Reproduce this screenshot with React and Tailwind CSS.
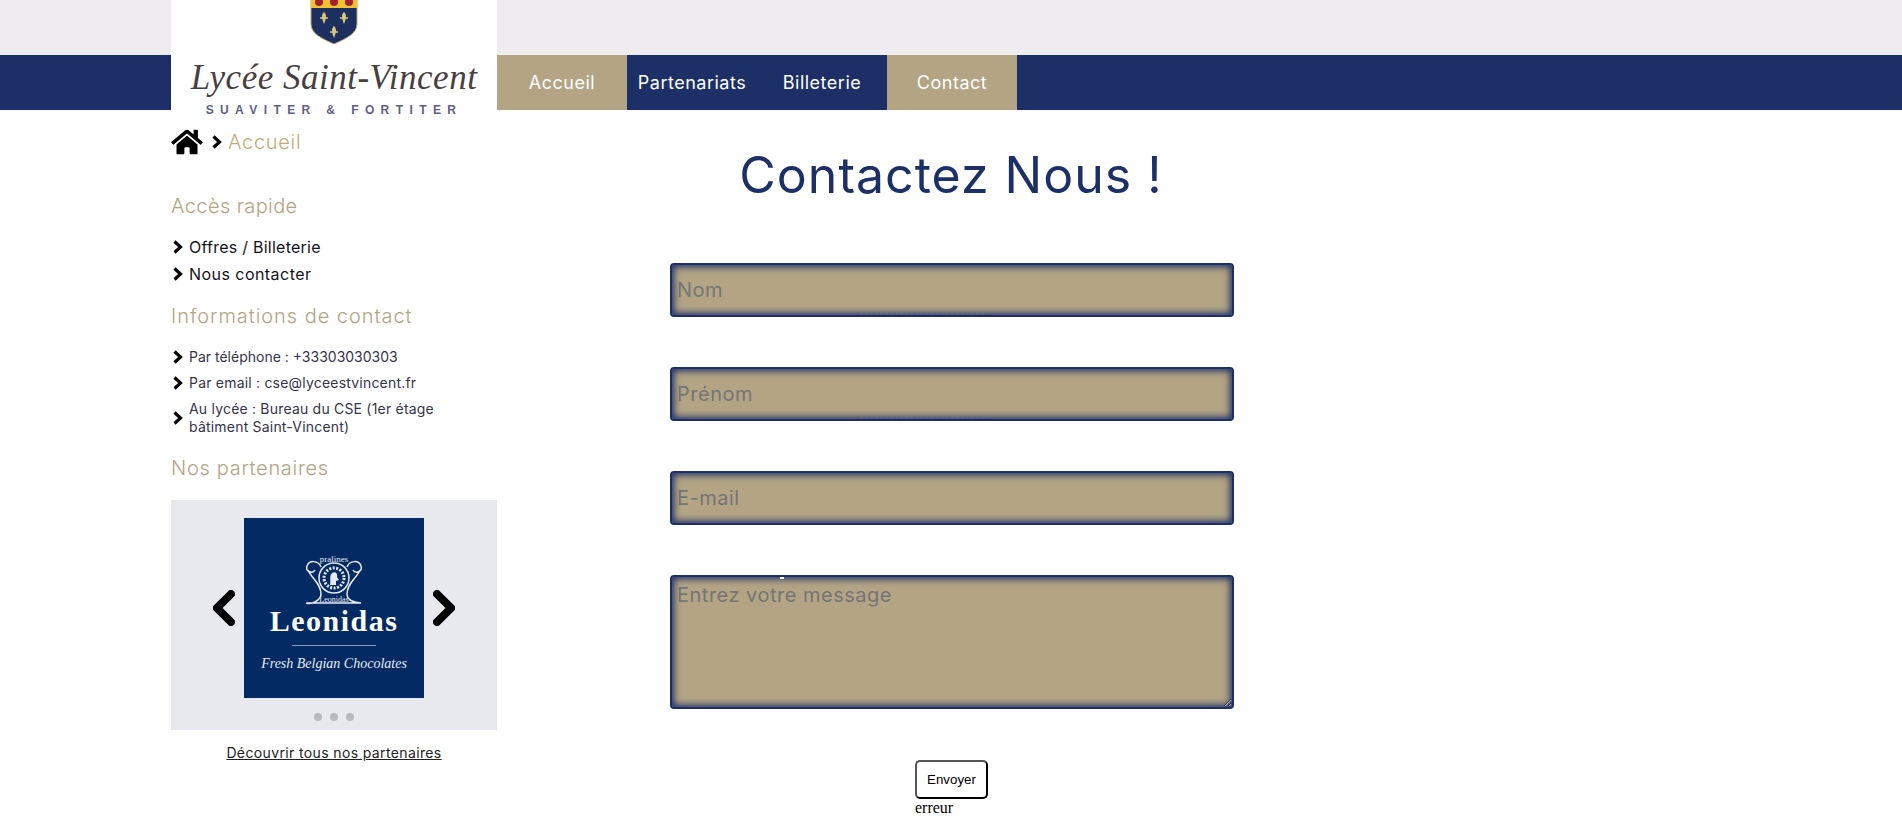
import { FaHome } from 'react-icons/fa'

const navItems = [
  { label: 'Accueil', className: 'bg-[#b3a484]' },
  { label: 'Partenariats', className: '' },
  { label: 'Billeterie', className: '' },
  { label: 'Contact', className: 'bg-[#b3a484]' },
]

function Shield() {
  return (
    <svg width="48" height="44" viewBox="0 0 48 44">
      <path d="M1 -2h46v26c0 10-12 15-23 20C13 39 1 34 1 24z" fill="#1c2f5e" stroke="#b9a36a" strokeWidth="1" />
      <path d="M1 -2h46v10H1z" fill="#f2c230" />
      <circle cx="9" cy="2" r="4" fill="#a3202c" />
      <circle cx="24" cy="2" r="4" fill="#a3202c" />
      <circle cx="39" cy="2" r="4" fill="#a3202c" />
      <path d="M14 13c2 2 2 4 0 9-2-5-2-7 0-9zM10 18h8M34 13c2 2 2 4 0 9-2-5-2-7 0-9zM30 18h8M24 27c2 2 2 4 0 9-2-5-2-7 0-9zM20 32h8" fill="#d9c67a" stroke="#d9c67a" strokeWidth="1.5" />
    </svg>
  )
}

function Logo() {
  return (
    <div className="absolute left-[171px] top-0 w-[326px] h-[118px] bg-white flex flex-col items-center">
      <Shield />
      <div className="mt-[15px] text-[35px] leading-[38px] italic text-[#47403f] font-['Liberation_Serif',serif] tracking-[0.5px]">
        Lycée Saint-Vincent
      </div>
      <div className="mt-[6px] text-[12px] leading-[14px] font-bold text-[#5f5f86] tracking-[6.4px] font-['Liberation_Sans',sans-serif] whitespace-nowrap">
        SUAVITER &amp; FORTITER
      </div>
    </div>
  )
}

function Header() {
  return (
    <header className="relative">
      <div className="h-[55px] bg-[#eeecee]" />
      <nav className="h-[55px] bg-[#1c3067] pl-[497px] flex">
        {navItems.map((item) => (
          <a key={item.label} className={`w-[130px] flex items-center justify-center text-white text-[18px] tracking-[0.5px] ${item.className}`}>
            {item.label}
          </a>
        ))}
      </nav>
      <Logo />
    </header>
  )
}

function SmallChevron({ className }) {
  return (
    <svg className={`w-[12px] h-[14px] shrink-0 ${className}`} viewBox="0 0 12 14" fill="none" stroke="black" strokeWidth="3.2">
      <polyline points="2.5,1.5 8.5,7 2.5,12.5" />
    </svg>
  )
}

function BigChevron({ flip }) {
  return (
    <svg className="w-[22px] h-[36px]" viewBox="0 0 22 36" fill="none" stroke="black" strokeWidth="8" strokeLinecap="round">
      <polyline points={flip ? '18,4 4,18 18,32' : '4,4 18,18 4,32'} />
    </svg>
  )
}

function ListItem({ children, className }) {
  return (
    <li className={`flex items-center gap-[5px] ${className}`}>
      <SmallChevron className="ml-[1px]" />
      <span>{children}</span>
    </li>
  )
}

function Heading({ children, className }) {
  return <h2 className={`text-[20px] leading-[24px] font-light text-[#b3a484] ${className}`}>{children}</h2>
}

function LeonidasLogo() {
  return (
    <div className="w-[180px] h-[180px] bg-[#032a63] flex flex-col items-center text-white">
      <svg className="mt-[35px]" width="62" height="54" viewBox="0 0 62 54" fill="none" stroke="#e6e9f0">
        <circle cx="31" cy="25" r="15" strokeWidth="1.5" />
        <circle cx="31" cy="25" r="10" strokeWidth="3" strokeDasharray="2 1.5" />
        <path d="M29 20c3-2 6 0 5 4l2 3-3 1v4h-6c1-4-1-9 2-12z" fill="#e6e9f0" stroke="none" />
        <path d="M18 14c-3-7-12-7-14-1-2 6 6 8 8 4M44 14c3-7 12-7 14-1 2 6-6 8-8 4M5 17c3 8 13 13 13 24 0 6-9 11-15 9M57 17c-3 8-13 13-13 24 0 6 7 9 14 9M4 50h52" strokeWidth="1.5" />
        <text x="31" y="9" textAnchor="middle" fontSize="9" fill="#e6e9f0" stroke="none" fontFamily="Liberation Serif, serif">pralines</text>
        <text x="31" y="49" textAnchor="middle" fontSize="8" fill="#e6e9f0" stroke="none" fontFamily="Liberation Serif, serif">Leonidas</text>
      </svg>
      <div className="text-[30px] leading-[28px] font-bold font-['Liberation_Serif',serif] tracking-[1.5px]">Leonidas</div>
      <div className="mt-[10px] w-[84px] h-[1px] bg-[#8c9bb8]" />
      <div className="mt-[10px] text-[14px] leading-[16px] italic text-[#e6e9f0] font-['Liberation_Serif',serif] whitespace-nowrap">
        Fresh Belgian Chocolates
      </div>
    </div>
  )
}

function Carousel() {
  return (
    <div className="mt-[20px] h-[230px] bg-[#e8e9ee] flex flex-col items-center pt-[18px]">
      <div className="flex items-center gap-[9px]">
        <BigChevron flip />
        <LeonidasLogo />
        <BigChevron />
      </div>
      <div className="mt-[15px] flex gap-[8px]">
        <span className="w-[8px] h-[8px] rounded-full bg-[#b9b9bc]" />
        <span className="w-[8px] h-[8px] rounded-full bg-[#b9b9bc]" />
        <span className="w-[8px] h-[8px] rounded-full bg-[#b9b9bc]" />
      </div>
    </div>
  )
}

function Sidebar() {
  return (
    <aside className="w-[326px] shrink-0">
      <div className="mt-[18px] h-[28px] flex items-center">
        <FaHome className="w-[32px] h-[28px] text-black" />
        <SmallChevron className="ml-[8px]" />
        <span className="ml-[5px] text-[20px] font-light tracking-[0.7px] text-[#c2ab78]">Accueil</span>
      </div>
      <Heading className="mt-[38px] tracking-[0.4px]">Accès rapide</Heading>
      <ul className="mt-[19px] flex flex-col gap-[7px] text-[16px] leading-[20px] text-[#14141c]">
        <ListItem className="tracking-[0.25px]">Offres / Billeterie</ListItem>
        <ListItem className="tracking-[0.45px]">Nous contacter</ListItem>
      </ul>
      <Heading className="mt-[20px] tracking-[0.95px]">Informations de contact</Heading>
      <ul className="mt-[20px] flex flex-col gap-[9px] text-[14px] leading-[17px] text-[#34344a]">
        <ListItem>Par téléphone : +33303030303</ListItem>
        <ListItem className="tracking-[0.2px]">Par email : cse@lyceestvincent.fr</ListItem>
        <ListItem className="leading-[18px] tracking-[0.2px]">Au lycée : Bureau du CSE (1er étage<br />bâtiment Saint-Vincent)</ListItem>
      </ul>
      <Heading className="mt-[20px] tracking-[0.7px]">Nos partenaires</Heading>
      <Carousel />
      <a className="mt-[14px] block text-center text-[14px] leading-[18px] tracking-[0.37px] underline text-[#222]">Découvrir tous nos partenaires</a>
    </aside>
  )
}

const fieldClass =
  "block w-full h-full bg-[#b3a484] border-2 border-[#1c3067] rounded-[4px] shadow-[inset_0_0_7px_2px_#1c3067] px-[5px] text-[20px] tracking-[0.5px] text-[#757575] placeholder:text-[#757575] outline-none"

function Field({ placeholder, className, marks }) {
  return (
    <div className={`relative w-[564px] h-[54px] ${className}`}>
      <input className={fieldClass} placeholder={placeholder} readOnly />
      {marks && <span className="absolute left-[190px] bottom-[3px] w-[124px] border-b border-dashed border-[#6b7088]" />}
    </div>
  )
}

function ContactForm() {
  return (
    <form className="flex flex-col items-center pl-[2px]">
      <Field placeholder="Nom" marks />
      <Field placeholder="Prénom" className="mt-[50px]" marks />
      <Field placeholder="E-mail" className="mt-[50px]" />
      <div className="relative w-[564px] h-[134px] mt-[50px]">
        <textarea className={`${fieldClass} pt-[3px]`} placeholder="Entrez votre message" readOnly />
        <span className="absolute left-[110px] top-[2px] w-[4px] h-[2px] bg-white" />
      </div>
      <div className="mt-[51px] w-[73px] self-start ml-[416px]">
        <button type="button" className="w-[73px] h-[39px] bg-white border-2 border-[#555] border-r-black border-b-black rounded-[5px] text-[13.33px] text-black font-['Liberation_Sans',sans-serif]">
          Envoyer
        </button>
        <div className="text-[16px] leading-[18px] text-black font-['Liberation_Serif',serif]">erreur</div>
      </div>
    </form>
  )
}

export default function App() {
  return (
    <div className="min-h-[837px] bg-white font-['Inter',sans-serif]">
      <Header />
      <div className="flex pl-[171px]">
        <Sidebar />
        <main className="w-[908px]">
          <h1 className="mt-[33px] mb-[56px] text-center text-[50px] leading-[64px] tracking-[1px] text-[#1c3067]">Contactez Nous !</h1>
          <ContactForm />
        </main>
      </div>
    </div>
  )
}
